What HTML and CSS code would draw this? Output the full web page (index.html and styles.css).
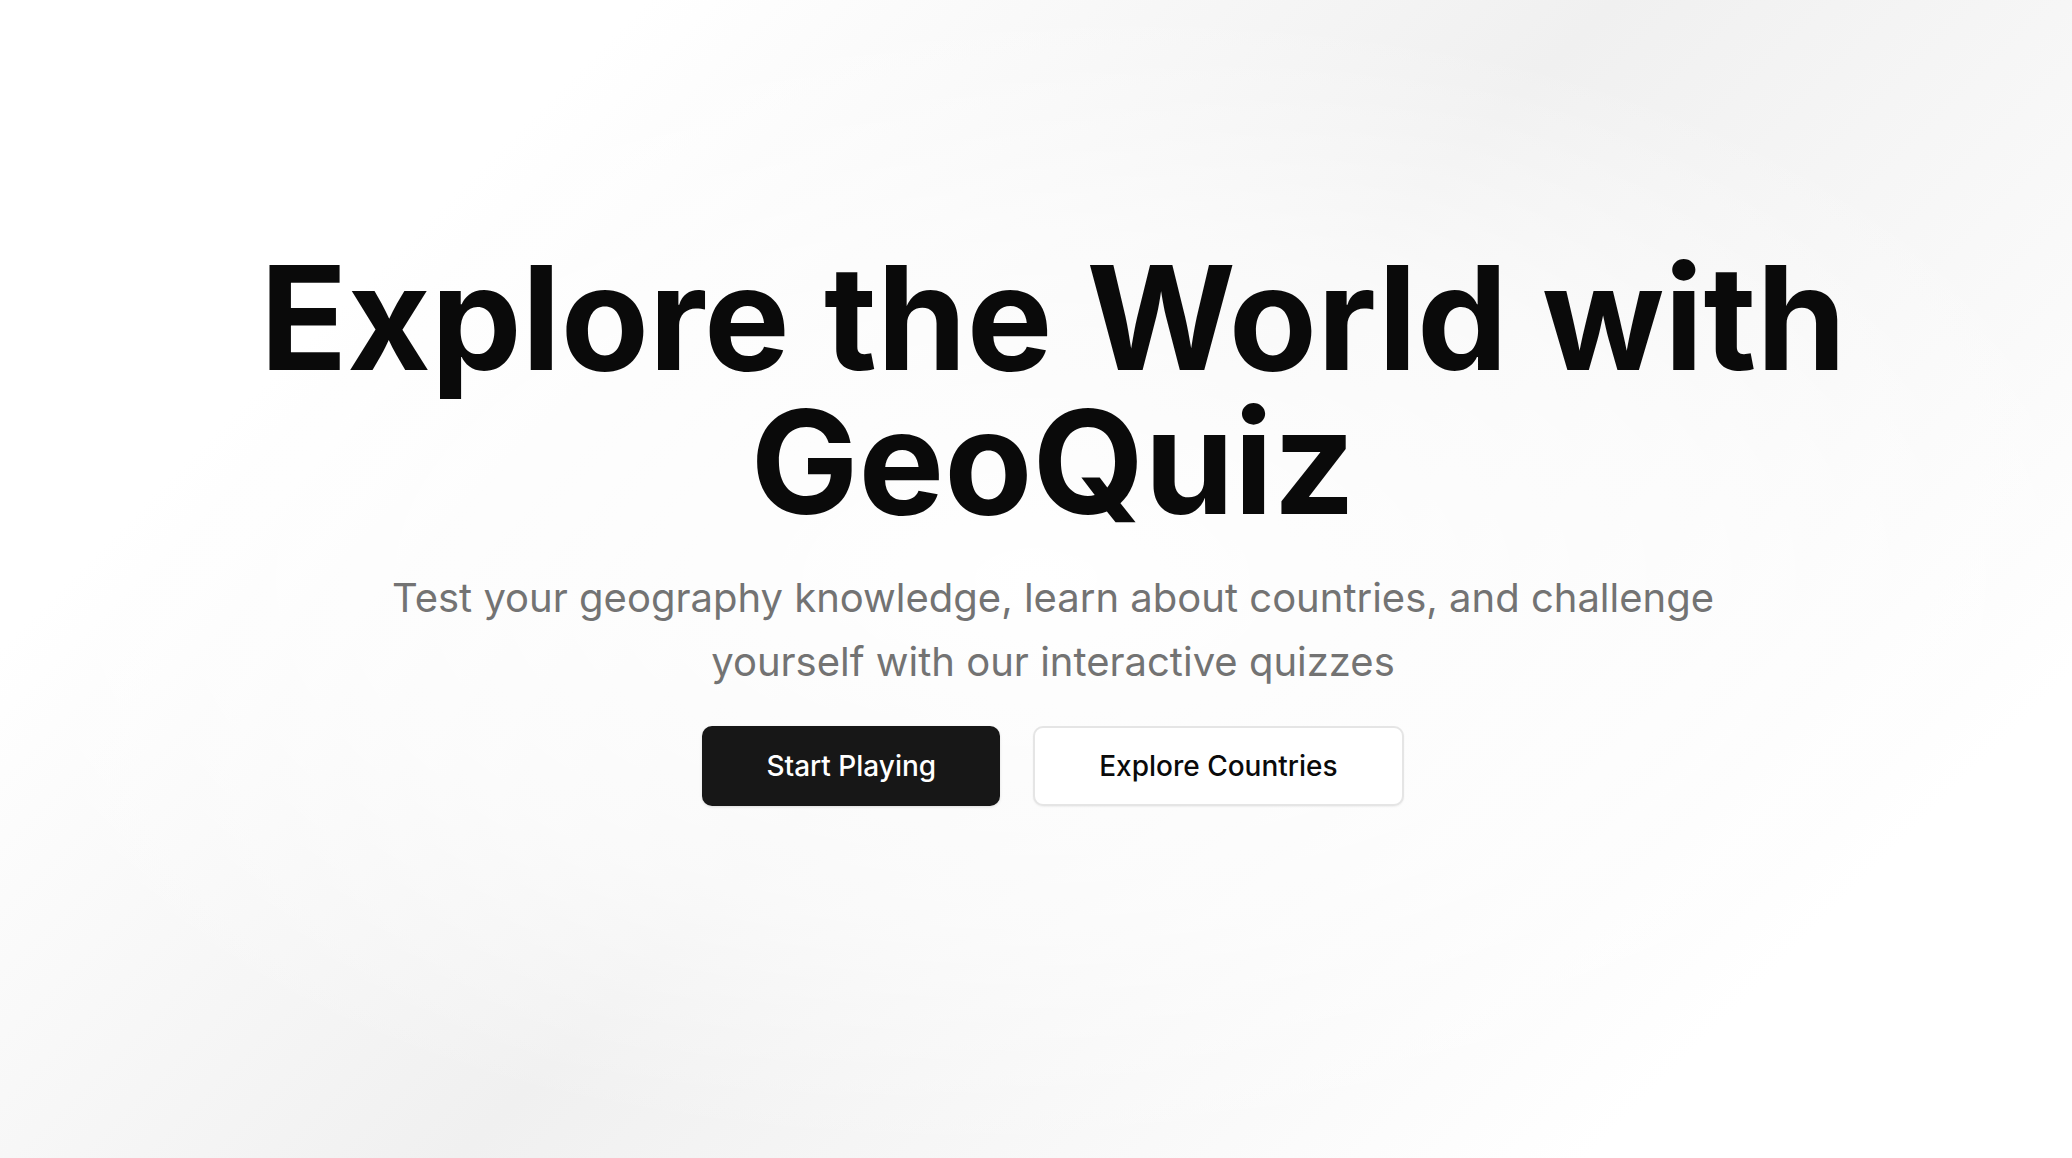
FILE: index.html
```html
<!DOCTYPE html>
<html lang="en">
<head>
<meta charset="utf-8">
<title>GeoQuiz</title>
<link rel="stylesheet" href="styles.css">
</head>
<body>
<main class="hero">
  <h1 class="hero-title">Explore the World with GeoQuiz</h1>
  <p class="hero-subtitle">Test your geography knowledge, learn about countries, and challenge yourself with our interactive quizzes</p>
  <div class="hero-actions">
    <a class="btn btn-primary" href="#">Start Playing</a>
    <a class="btn btn-outline" href="#">Explore Countries</a>
  </div>
</main>
</body>
</html>
```

FILE: styles.css
```css
* { box-sizing: border-box; }
html, body { margin: 0; padding: 0; }
body {
  min-height: 100vh;
  font-family: Inter, "Noto Sans", sans-serif;
  color: #0a0a0a;
  background:
    radial-gradient(ellipse 55% 50% at 50% 50%, rgba(255,255,255,1) 0%, rgba(255,255,255,0.6) 60%, rgba(255,255,255,0) 100%),
    linear-gradient(135deg, #ffffff 0%, #ffffff 20%, #f0f0f0 50%, #ffffff 85%, #ffffff 100%);
}
.hero {
  min-height: 100vh;
  display: flex;
  flex-direction: column;
  align-items: center;
  padding-top: 246px;
  padding-left: 34px;
  text-align: center;
}
.hero-title {
  margin: 0;
  font-size: 144px;
  line-height: 1;
  font-weight: 700;
  letter-spacing: 0;
  color: #0a0a0a;
  max-width: 1700px;
}
.hero-subtitle {
  margin: 32px 0 0;
  max-width: 1340px;
  font-size: 40px;
  line-height: 64px;
  font-weight: 400;
  color: #737373;
}
.hero-actions {
  margin-top: 32px;
  display: flex;
  gap: 33px;
}
.btn {
  display: inline-flex;
  align-items: center;
  justify-content: center;
  height: 80px;
  padding: 0 64px;
  border-radius: 10px;
  font-size: 28px;
  font-weight: 500;
  text-decoration: none;
}
.btn-primary {
  background: #171717;
  color: #ffffff;
  box-shadow: 0 1px 3px rgba(0,0,0,0.12);
}
.btn-outline {
  background: #ffffff;
  color: #0a0a0a;
  border: 2px solid #e5e5e5;
  box-shadow: 0 1px 2px rgba(0,0,0,0.06);
}
```
